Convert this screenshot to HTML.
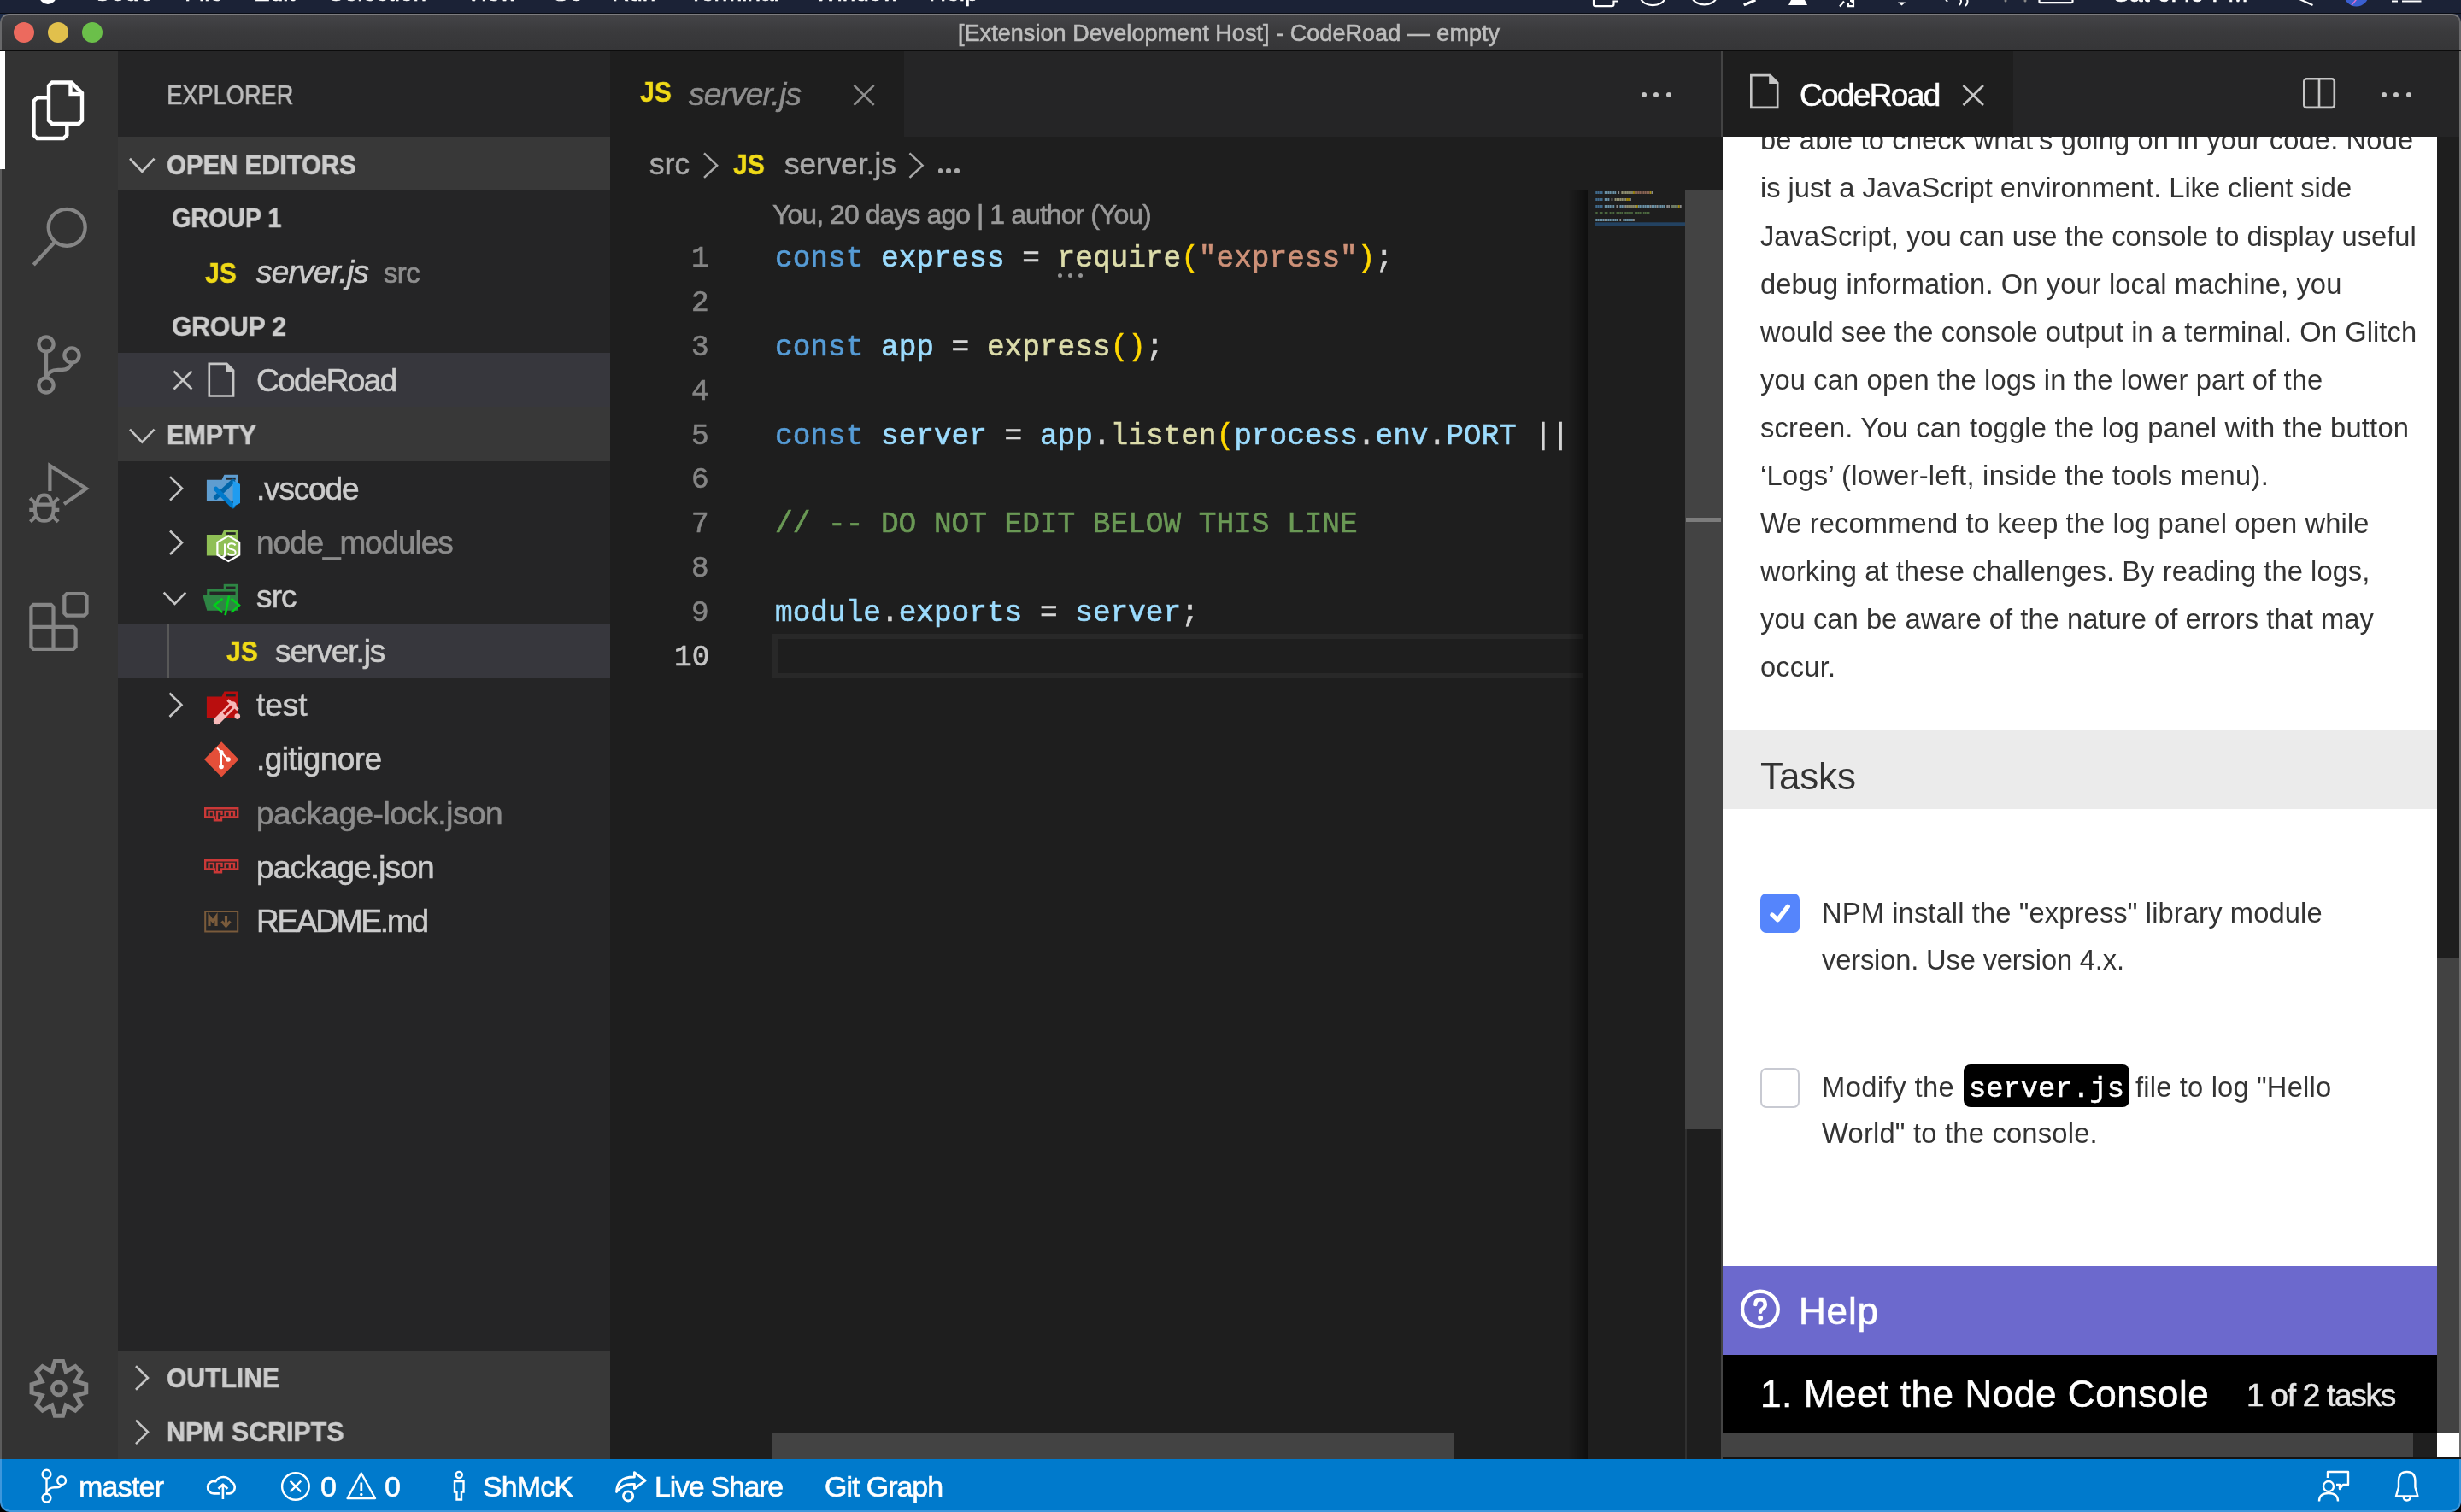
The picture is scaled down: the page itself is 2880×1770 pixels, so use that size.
<!DOCTYPE html><html><head><meta charset="utf-8"><style>
html,body{margin:0;padding:0;width:2880px;height:1770px;overflow:hidden;background:#000;}
.r{position:absolute;display:block;}
.t{position:absolute;white-space:pre;}
.t,svg{will-change:transform;}
.t{-webkit-text-stroke:0.6px currentColor;}
</style></head><body>
<div class="r" style="left:0.0px;top:0.0px;width:2880.0px;height:16.0px;background:#1b2236;"></div>
<div class="r" style="left:0.0px;top:14.6px;width:2880.0px;height:1.4px;background:#0a0d15;"></div>
<div class="r" style="left:0.0px;top:16.0px;width:14.0px;height:14.0px;background:#1f2d48;"></div>
<div class="r" style="left:2866.0px;top:16.0px;width:14.0px;height:14.0px;background:#1b2236;"></div>
<div class="t" style="left:108.9px;top:-21.7px;font-size:28px;line-height:28px;color:#ffffff;font-weight:bold;font-style:normal;font-family:'Liberation Sans', sans-serif;letter-spacing:0.00px;">Code</div>
<div class="t" style="left:215.9px;top:-21.7px;font-size:28px;line-height:28px;color:#ffffff;font-weight:normal;font-style:normal;font-family:'Liberation Sans', sans-serif;letter-spacing:0.00px;">File</div>
<div class="t" style="left:296.9px;top:-21.7px;font-size:28px;line-height:28px;color:#ffffff;font-weight:normal;font-style:normal;font-family:'Liberation Sans', sans-serif;letter-spacing:0.00px;">Edit</div>
<div class="t" style="left:383.9px;top:-21.7px;font-size:28px;line-height:28px;color:#ffffff;font-weight:normal;font-style:normal;font-family:'Liberation Sans', sans-serif;letter-spacing:0.00px;">Selection</div>
<div class="t" style="left:544.9px;top:-21.7px;font-size:28px;line-height:28px;color:#ffffff;font-weight:normal;font-style:normal;font-family:'Liberation Sans', sans-serif;letter-spacing:0.00px;">View</div>
<div class="t" style="left:644.9px;top:-21.7px;font-size:28px;line-height:28px;color:#ffffff;font-weight:normal;font-style:normal;font-family:'Liberation Sans', sans-serif;letter-spacing:0.00px;">Go</div>
<div class="t" style="left:715.9px;top:-21.7px;font-size:28px;line-height:28px;color:#ffffff;font-weight:normal;font-style:normal;font-family:'Liberation Sans', sans-serif;letter-spacing:0.00px;">Run</div>
<div class="t" style="left:805.9px;top:-21.7px;font-size:28px;line-height:28px;color:#ffffff;font-weight:normal;font-style:normal;font-family:'Liberation Sans', sans-serif;letter-spacing:0.00px;">Terminal</div>
<div class="t" style="left:952.9px;top:-21.7px;font-size:28px;line-height:28px;color:#ffffff;font-weight:normal;font-style:normal;font-family:'Liberation Sans', sans-serif;letter-spacing:0.00px;">Window</div>
<div class="t" style="left:1086.9px;top:-21.7px;font-size:28px;line-height:28px;color:#ffffff;font-weight:normal;font-style:normal;font-family:'Liberation Sans', sans-serif;letter-spacing:0.00px;">Help</div>
<div class="r" style="left:46.0px;top:-10.0px;width:20.0px;height:15.0px;background:#ffffff;border-radius:0 0 10px 10px;"></div>
<svg class="r" style="left:1855px;top:0px;width:1005px;height:16px" viewBox="1855 0 1005 16"><g fill="none" stroke="#ffffff" stroke-width="2.2"><path d="M1865,-6 L1865,5 Q1865,7.2 1867.5,7.2 L1886,7.2 Q1888.5,7.2 1888.5,5 L1888.5,1.5 L1893,1.5"/><path d="M1920,-2 A14.5,10 0 0 0 1948.5,-2"/><path d="M1980.5,-2 A14.5,10 0 0 0 2008.5,-2"/><path d="M2158,1.5 L2153,7.5 M2163,3 L2163,7.2 L2169,7.2 L2169,-1 M2165,1 L2167.5,1 L2167.5,4"/><path d="M2276,-2 L2279,2 M2293,-3 Q2297,2 2293,6 M2300,-4 Q2305,2 2300,7" stroke-width="2"/><path d="M2386.5,-6 L2386.5,2 Q2386.5,3.2 2388,3.2 L2424,3.2 Q2425.5,3.2 2425.5,2 L2425.5,-6"/><path d="M2691,-1 L2706.5,6"/><path d="M2799,1.5 L2806,1.5 M2811,1.5 L2833.5,1.5"/></g><path d="M2040,4.5 L2054,-1.5 L2055,1.5 L2041.5,7.2 Z" fill="#ffffff"/><path d="M2093,6 L2115,6 L2111,-2 L2097,-2 Z" fill="#ffffff"/><path d="M2221,2.5 L2225.5,6.5 L2230,2.5 Z" fill="#ffffff"/><circle cx="2757.5" cy="-7" r="14.5" fill="#3a5fd0"/><path d="M2752,6 L2762,-6" stroke="#e070d0" stroke-width="1.5"/><circle cx="2347" cy="1" r="1.5" fill="#888"/><circle cx="2370" cy="1" r="1.5" fill="#888"/></svg>
<div class="t" style="left:2473.0px;top:-21.1px;font-size:28px;line-height:28px;color:#ffffff;font-weight:normal;font-style:normal;font-family:'Liberation Sans', sans-serif;letter-spacing:0.34px;">Sat 6:49 PM</div>
<div class="r" style="left:0.0px;top:16.0px;width:2880.0px;height:46.0px;background:linear-gradient(#444447,#3a3a3c 45%,#353537);border-radius:10px 10px 0 0;box-sizing:border-box;border-top:2px solid #7c7c7f;border-left:2px solid #68686a;border-right:2px solid #68686a;"></div>
<div class="r" style="left:0.0px;top:58.5px;width:2880.0px;height:1.5px;background:#0c0c0c;"></div>
<div class="r" style="left:16.0px;top:26.0px;width:24.0px;height:24.0px;background:#ec6a5e;border-radius:50%;"></div>
<div class="r" style="left:56.0px;top:26.0px;width:24.0px;height:24.0px;background:#e1c04c;border-radius:50%;"></div>
<div class="r" style="left:96.0px;top:26.0px;width:24.0px;height:24.0px;background:#6bbf4a;border-radius:50%;"></div>
<div class="t" style="left:1121.0px;top:26.2px;font-size:27px;line-height:27px;color:#bdbdbd;font-weight:normal;font-style:normal;font-family:'Liberation Sans', sans-serif;letter-spacing:0.05px;">[Extension Development Host] - CodeRoad — empty</div>
<div class="r" style="left:0.0px;top:60.0px;width:2880.0px;height:1648.0px;background:#1e1e1e;"></div>
<div class="r" style="left:0.0px;top:60.0px;width:138.0px;height:1648.0px;background:#333333;"></div>
<div class="r" style="left:0.0px;top:60.0px;width:2.0px;height:1648.0px;background:#5c5c5c;"></div>
<div class="r" style="left:138.0px;top:60.0px;width:576.0px;height:1648.0px;background:#252526;"></div>
<div class="r" style="left:0.0px;top:60.0px;width:6.0px;height:138.0px;background:#ffffff;"></div>
<svg class="r" style="left:20px;top:80px;width:100px;height:100px" viewBox="20 80 100 100"><g fill="none" stroke="#ffffff" stroke-width="4.4" stroke-linejoin="miter"><path d="M61,96.5 L83.5,96.5 L96,109 L96,141 L92,145 L61,145 L57,141 L57,100.5 Z"/><path d="M82.5,96.5 L82.5,110 L96,110"/><path d="M57,114.3 L43.5,114.3 L39.5,118.3 L39.5,158 L43.5,162 L74.3,162 L78.3,158 L78.3,145"/></g></svg>
<svg class="r" style="left:20px;top:230px;width:100px;height:100px" viewBox="20 230 100 100"><g fill="none" stroke="#858585" stroke-width="4.3"><circle cx="78.2" cy="266.3" r="21.5"/><path d="M63.4,284 L39.3,310"/></g></svg>
<svg class="r" style="left:30px;top:380px;width:80px;height:90px" viewBox="30 380 80 90"><g fill="none" stroke="#858585" stroke-width="4.3"><circle cx="54" cy="403" r="8.6"/><circle cx="84" cy="416" r="8.6"/><circle cx="54" cy="451" r="8.6"/><path d="M54,411.6 L54,442.4"/><path d="M54,442 Q57,433 68,433 L72,433 Q82,433 84,424.6"/></g></svg>
<svg class="r" style="left:20px;top:530px;width:100px;height:100px" viewBox="20 530 100 100"><g fill="none" stroke="#858585" stroke-width="4.2"><path d="M58.4,575 L58.4,545 L101,572 L75,590" stroke-linejoin="miter"/><path d="M43.6,590.6 Q43.6,579.5 51.8,579.5 Q60,579.5 60,590.6"/><path d="M38.9,590.6 L64.7,590.6 M40.9,590.6 L40.9,595 Q40.9,609.7 51.8,609.7 Q62.7,609.7 62.7,595 L62.7,590.6"/><path d="M34.3,596.9 L40.9,596.9 M69.3,596.9 L62.7,596.9 M35.2,583.3 L41.8,589.6 M68.4,583.3 L61.8,589.6 M35.5,610.8 L42.3,604 M68.1,610.8 L61.3,604"/></g></svg>
<svg class="r" style="left:20px;top:680px;width:100px;height:100px" viewBox="20 680 100 100"><g fill="none" stroke="#858585" stroke-width="4.2"><path d="M78,695 L98.7,695 L101.5,697.8 L101.5,717.8 L98.7,720.6 L78,720.6 L75.3,717.8 L75.3,697.8 Z"/><path d="M39.2,707.8 L59.7,707.8 L62.5,710.6 L62.5,733.8 L85.8,733.8 L88.6,736.6 L88.6,757.1 L85.8,759.9 L39.2,759.9 L36.4,757.1 L36.4,710.6 Z"/><path d="M36.4,733.8 L62.5,733.8 L62.5,759.9"/></g></svg>
<svg class="r" style="left:20px;top:1575px;width:100px;height:100px" viewBox="20 1575 100 100"><g fill="none" stroke="#858585" stroke-width="5"><polygon points="64.20,1593.55 73.60,1593.55 77.09,1605.63 88.10,1599.55 94.75,1606.20 88.67,1617.21 100.75,1620.70 100.75,1630.10 88.67,1633.59 94.75,1644.60 88.10,1651.25 77.09,1645.17 73.60,1657.25 64.20,1657.25 60.71,1645.17 49.70,1651.25 43.05,1644.60 49.13,1633.59 37.05,1630.10 37.05,1620.70 49.13,1617.21 43.05,1606.20 49.70,1599.55 60.71,1605.63" stroke-linejoin="miter"/><circle cx="68.9" cy="1625.4" r="7.45" stroke-width="4.9"/></g></svg>
<div class="t" style="left:195.0px;top:96.3px;font-size:31px;line-height:31px;color:#bbbbbb;font-weight:normal;font-style:normal;font-family:'Liberation Sans', sans-serif;letter-spacing:0.00px;transform:scaleX(0.8766);transform-origin:2px 0;">EXPLORER</div>
<div class="r" style="left:138.0px;top:160.0px;width:576.0px;height:63.4px;background:#383838;"></div>
<svg class="r" style="left:147px;top:177px;width:38px;height:31px" viewBox="147 177 38 31"><path d="M152,185.75 L166.3,200.75 L180.6,185.75" fill="none" stroke="#c5c5c5" stroke-width="2.6"/></svg>
<div class="t" style="left:195.0px;top:177.6px;font-size:31px;line-height:31px;color:#cccccc;font-weight:bold;font-style:normal;font-family:'Liberation Sans', sans-serif;letter-spacing:0.00px;transform:scaleX(0.9478);transform-origin:2px 0;">OPEN EDITORS</div>
<div class="t" style="left:200.8px;top:239.8px;font-size:31px;line-height:31px;color:#cccccc;font-weight:bold;font-style:normal;font-family:'Liberation Sans', sans-serif;letter-spacing:0.00px;transform:scaleX(0.9224);transform-origin:2px 0;">GROUP 1</div>
<div class="t" style="left:240.2px;top:302.3px;font-size:34px;line-height:34px;color:#f0da17;font-weight:bold;font-style:normal;font-family:'Liberation Sans', sans-serif;letter-spacing:0.00px;transform:scaleX(0.8775);transform-origin:1.5px 0;">JS</div>
<div class="t" style="left:299.6px;top:299.7px;font-size:37px;line-height:37px;color:#cccccc;font-weight:normal;font-style:italic;font-family:'Liberation Sans', sans-serif;letter-spacing:-0.80px;">server.js</div>
<div class="t" style="left:449.0px;top:303.1px;font-size:33px;line-height:33px;color:#8f8f8f;font-weight:normal;font-style:normal;font-family:'Liberation Sans', sans-serif;letter-spacing:-0.65px;">src</div>
<div class="t" style="left:200.8px;top:366.5px;font-size:31px;line-height:31px;color:#cccccc;font-weight:bold;font-style:normal;font-family:'Liberation Sans', sans-serif;letter-spacing:0.00px;transform:scaleX(0.9641);transform-origin:2px 0;">GROUP 2</div>
<div class="r" style="left:138.0px;top:413.4px;width:576.0px;height:63.4px;background:#37373d;"></div>
<svg class="r" style="left:195px;top:425px;width:37px;height:40px" viewBox="195 425 37 40"><path d="M203.5,434.5 L224.5,455.5 M224.5,434.5 L203.5,455.5" stroke="#c5c5c5" stroke-width="2.6" fill="none"/></svg>
<svg class="r" style="left:240px;top:421px;width:37px;height:46px" viewBox="240 421 37 46"><path d="M244.8,425.90000000000003 L265.4,425.90000000000003 L273.09999999999997,433.6 L273.09999999999997,463.5 L244.8,463.5 Z" fill="none" stroke="#c5c5c5" stroke-width="2.6" stroke-linejoin="miter"/><path d="M264.09999999999997,424.6 L274.4,434.90000000000003 L264.09999999999997,434.90000000000003 Z" fill="#c5c5c5"/></svg>
<div class="t" style="left:299.6px;top:426.7px;font-size:37px;line-height:37px;color:#cccccc;font-weight:normal;font-style:normal;font-family:'Liberation Sans', sans-serif;letter-spacing:-1.67px;">CodeRoad</div>
<div class="r" style="left:138.0px;top:476.8px;width:576.0px;height:63.4px;background:#383838;"></div>
<svg class="r" style="left:147px;top:494px;width:38px;height:31px" viewBox="147 494 38 31"><path d="M152,502.55 L166.3,517.55 L180.6,502.55" fill="none" stroke="#c5c5c5" stroke-width="2.6"/></svg>
<div class="t" style="left:195.0px;top:494.4px;font-size:31px;line-height:31px;color:#cccccc;font-weight:bold;font-style:normal;font-family:'Liberation Sans', sans-serif;letter-spacing:0.00px;transform:scaleX(0.9832);transform-origin:2px 0;">EMPTY</div>
<svg class="r" style="left:194px;top:543px;width:23px;height:57px" viewBox="194 543 23 57"><path d="M199,558.0899999999999 L213.0,571.8399999999999 L199,585.5899999999999" fill="none" stroke="#c5c5c5" stroke-width="2.6"/></svg>
<svg class="r" style="left:239px;top:547px;width:44px;height:42px" viewBox="239 547 44 42"><path d="M241.9,561.7 L259.6,561.7 L262.4,555.7 L278.9,555.7 L278.9,586.3000000000001 L241.9,586.3000000000001 Z" fill="#5f9dd0"/><rect x="264.7" y="558.9000000000001" width="11" height="2.8" fill="#252526"/></svg>
<svg class="r" style="left:245px;top:555px;width:45px;height:45px" viewBox="245 555 45 45"><path d="M272.6,563.4 L252.6,582.2" stroke="#0065a9" stroke-width="5.4" stroke-linecap="round"/><path d="M252.6,572.4 L272.6,592.6" stroke="#007acc" stroke-width="5.4" stroke-linecap="round"/><path d="M272.6,562.7 L281,566.8 L281,589 L272.6,593.2 Z" fill="#1f9cf0"/></svg>
<div class="t" style="left:299.6px;top:553.5px;font-size:37px;line-height:37px;color:#cccccc;font-weight:normal;font-style:normal;font-family:'Liberation Sans', sans-serif;letter-spacing:-1.17px;">.vscode</div>
<svg class="r" style="left:194px;top:606px;width:23px;height:57px" viewBox="194 606 23 57"><path d="M199,621.4499999999999 L213.0,635.1999999999999 L199,648.9499999999999" fill="none" stroke="#c5c5c5" stroke-width="2.6"/></svg>
<svg class="r" style="left:239px;top:611px;width:44px;height:42px" viewBox="239 611 44 42"><path d="M241.9,625.9 L259.6,625.9 L262.4,619.9 L278.9,619.9 L278.9,650.5 L241.9,650.5 Z" fill="#8fbf55"/><rect x="264.7" y="623.1" width="11" height="2.8" fill="#252526"/></svg>
<svg class="r" style="left:250px;top:620px;width:36px;height:42px" viewBox="250 620 36 42"><path d="M267.3,627.4 L280.2,634.9 L280.2,649.5 L267.3,657 L254.4,649.5 L254.4,634.9 Z" fill="none" stroke="#ffffff" stroke-width="2.2"/><path d="M263.1,636.5 L263.1,648.5 Q263.1,652 260,652 L257.6,652" fill="none" stroke="#ffffff" stroke-width="2.2"/><path d="M275.5,638.5 Q274.5,636.2 271,636.2 Q267,636.2 267,639.4 Q267,642.2 271,643 Q275.6,643.8 275.6,646.8 Q275.6,650 271.2,650 Q267.4,650 266.6,647.4" fill="none" stroke="#ffffff" stroke-width="2"/></svg>
<div class="t" style="left:299.6px;top:616.9px;font-size:37px;line-height:37px;color:#8c8c8c;font-weight:normal;font-style:normal;font-family:'Liberation Sans', sans-serif;letter-spacing:-1.10px;">node_modules</div>
<svg class="r" style="left:186px;top:686px;width:36px;height:27px" viewBox="186 686 36 27"><path d="M191.7,693.7 L204.5,707.0 L217.29999999999998,693.7" fill="none" stroke="#c5c5c5" stroke-width="2.6"/></svg>
<svg class="r" style="left:234px;top:680px;width:50px;height:42px" viewBox="234 680 50 42"><rect x="261.7" y="683.8" width="16.9" height="7" fill="#2e8544"/><rect x="264.5" y="686.6" width="11" height="3.6" fill="#252526"/><rect x="242.2" y="690" width="36.4" height="24.6" fill="#2e8544"/><rect x="245.4" y="692.6" width="30.1" height="3.8" fill="#252526"/><path d="M237.2,696.4 L273.6,696.4 L279.3,714.6 L242.2,714.6 Z" fill="#2e8544"/><path d="M260.4,700.8 L251,708.6 L260.4,717.1 M270.5,700.8 L279.9,708.6 L270.5,717.1 M268,697.5 L263.6,720.3" fill="none" stroke="#00d01a" stroke-width="2.6"/></svg>
<div class="t" style="left:299.6px;top:680.2px;font-size:37px;line-height:37px;color:#cccccc;font-weight:normal;font-style:normal;font-family:'Liberation Sans', sans-serif;letter-spacing:-0.86px;">src</div>
<div class="r" style="left:138.0px;top:730.2px;width:576.0px;height:63.4px;background:#37373d;"></div>
<div class="r" style="left:196.0px;top:730.2px;width:2.3px;height:63.4px;background:#585858;"></div>
<div class="t" style="left:264.5px;top:745.0px;font-size:34px;line-height:34px;color:#f0da17;font-weight:bold;font-style:normal;font-family:'Liberation Sans', sans-serif;letter-spacing:0.00px;transform:scaleX(0.8775);transform-origin:1.5px 0;">JS</div>
<div class="t" style="left:322.0px;top:743.6px;font-size:37px;line-height:37px;color:#cccccc;font-weight:normal;font-style:normal;font-family:'Liberation Sans', sans-serif;letter-spacing:-1.05px;">server.js</div>
<svg class="r" style="left:193px;top:796px;width:24px;height:57px" viewBox="193 796 24 57"><path d="M198.5,811.53 L212.5,825.28 L198.5,839.03" fill="none" stroke="#c5c5c5" stroke-width="2.6"/></svg>
<svg class="r" style="left:239px;top:801px;width:44px;height:42px" viewBox="239 801 44 42"><path d="M241.9,815.4 L259.6,815.4 L262.4,809.4 L278.9,809.4 L278.9,840.0 L241.9,840.0 Z" fill="#b90e0e"/><rect x="264.7" y="812.6" width="11" height="2.8" fill="#252526"/></svg>
<svg class="r" style="left:244px;top:812px;width:46px;height:44px" viewBox="244 812 46 44"><path d="M272.5,825.5 L254,844" stroke="#f7b9b9" stroke-width="8.5" stroke-linecap="round"/><path d="M271.5,826.5 L262,836" stroke="#b90e0e" stroke-width="3.2"/><path d="M266.5,819.5 L278.5,831" stroke="#f7b9b9" stroke-width="3.4"/><circle cx="277.8" cy="838.6" r="3.3" fill="#f7b9b9"/></svg>
<div class="t" style="left:299.6px;top:806.9px;font-size:37px;line-height:37px;color:#cccccc;font-weight:normal;font-style:normal;font-family:'Liberation Sans', sans-serif;letter-spacing:-0.05px;">test</div>
<svg class="r" style="left:236px;top:866px;width:46px;height:46px" viewBox="236 866 46 46"><path d="M259.2,868.3 L279.4,889 L259.2,909.6 L239,889 Z" fill="#e44f39"/><path d="M254,875.5 L259,880.5 L259,898 M259,880.5 L266,888.5" stroke="#ffffff" stroke-width="2" fill="none"/><circle cx="259" cy="880.5" r="2.6" fill="#fff"/><circle cx="259" cy="897.5" r="2.8" fill="#fff"/><circle cx="267" cy="889" r="2.8" fill="#fff"/></svg>
<div class="t" style="left:299.6px;top:870.3px;font-size:37px;line-height:37px;color:#cccccc;font-weight:normal;font-style:normal;font-family:'Liberation Sans', sans-serif;letter-spacing:-0.58px;">.gitignore</div>
<svg class="r" style="left:236px;top:942px;width:46px;height:23px" viewBox="236 942 46 23"><path d="M240.2,946.2 L278.2,946.2 L278.2,956.5 L259,956.5 L259,960.2 L251,960.2 L251,956.5 L240.2,956.5 Z" fill="none" stroke="#cb3837" stroke-width="2.4"/><path d="M244.5,955.5 L244.5,950 L250,950 L250,955.5 M254,959 L254,950 L259.5,950 L259.5,954 M263.5,955.5 L263.5,950 L274,950 L274,955.5 M268.8,950 L268.8,955.5" fill="none" stroke="#cb3837" stroke-width="2.4"/></svg>
<div class="t" style="left:299.6px;top:933.7px;font-size:37px;line-height:37px;color:#8c8c8c;font-weight:normal;font-style:normal;font-family:'Liberation Sans', sans-serif;letter-spacing:-0.47px;">package-lock.json</div>
<svg class="r" style="left:236px;top:1003px;width:46px;height:23px" viewBox="236 1003 46 23"><path d="M240.2,1007.2 L278.2,1007.2 L278.2,1017.5 L259,1017.5 L259,1021.2 L251,1021.2 L251,1017.5 L240.2,1017.5 Z" fill="none" stroke="#cb3837" stroke-width="2.4"/><path d="M244.5,1016.5 L244.5,1011 L250,1011 L250,1016.5 M254,1020 L254,1011 L259.5,1011 L259.5,1015 M263.5,1016.5 L263.5,1011 L274,1011 L274,1016.5 M268.8,1011 L268.8,1016.5" fill="none" stroke="#cb3837" stroke-width="2.4"/></svg>
<div class="t" style="left:299.6px;top:997.0px;font-size:37px;line-height:37px;color:#cccccc;font-weight:normal;font-style:normal;font-family:'Liberation Sans', sans-serif;letter-spacing:-0.87px;">package.json</div>
<svg class="r" style="left:236px;top:1062px;width:46px;height:32px" viewBox="236 1062 46 32"><rect x="240.2" y="1067" width="38" height="23.5" fill="none" stroke="#7a5b3b" stroke-width="2"/><path d="M245,1084 L245,1073 L249,1078.5 L253,1073 L253,1084 M264.5,1072 L264.5,1083 M259.5,1078.5 L264.5,1084 L269.5,1078.5" fill="none" stroke="#7a5b3b" stroke-width="3.2"/></svg>
<div class="t" style="left:299.6px;top:1060.4px;font-size:37px;line-height:37px;color:#cccccc;font-weight:normal;font-style:normal;font-family:'Liberation Sans', sans-serif;letter-spacing:-2.25px;">README.md</div>
<div class="r" style="left:138.0px;top:1581.3px;width:576.0px;height:126.7px;background:#383838;"></div>
<svg class="r" style="left:154px;top:1584px;width:23px;height:57px" viewBox="154 1584 23 57"><path d="M159,1599.23 L173.0,1612.98 L159,1626.73" fill="none" stroke="#c5c5c5" stroke-width="2.6"/></svg>
<div class="t" style="left:195.0px;top:1597.8px;font-size:31px;line-height:31px;color:#cccccc;font-weight:bold;font-style:normal;font-family:'Liberation Sans', sans-serif;letter-spacing:0.00px;transform:scaleX(0.9701);transform-origin:2px 0;">OUTLINE</div>
<svg class="r" style="left:154px;top:1647px;width:23px;height:57px" viewBox="154 1647 23 57"><path d="M159,1662.59 L173.0,1676.34 L159,1690.09" fill="none" stroke="#c5c5c5" stroke-width="2.6"/></svg>
<div class="t" style="left:195.0px;top:1661.2px;font-size:31px;line-height:31px;color:#cccccc;font-weight:bold;font-style:normal;font-family:'Liberation Sans', sans-serif;letter-spacing:0.00px;transform:scaleX(0.9794);transform-origin:2px 0;">NPM SCRIPTS</div>
<div class="r" style="left:714.0px;top:60.0px;width:1300.0px;height:100.0px;background:#252526;"></div>
<div class="r" style="left:714.0px;top:60.0px;width:343.6px;height:100.0px;background:#1e1e1e;"></div>
<div class="r" style="left:2013.5px;top:60.0px;width:2.5px;height:100.0px;background:#444444;"></div>
<div class="t" style="left:748.5px;top:90.3px;font-size:34px;line-height:34px;color:#f0da17;font-weight:bold;font-style:normal;font-family:'Liberation Sans', sans-serif;letter-spacing:0.00px;transform:scaleX(0.8775);transform-origin:1.5px 0;">JS</div>
<div class="t" style="left:805.6px;top:92.3px;font-size:37px;line-height:37px;color:#8e8e8e;font-weight:normal;font-style:italic;font-family:'Liberation Sans', sans-serif;letter-spacing:-0.80px;">server.js</div>
<svg class="r" style="left:994px;top:95px;width:34px;height:33px" viewBox="994 95 34 33"><path d="M999.5,99.8 L1022.7,122.8 M1022.7,99.8 L999.5,122.8" stroke="#8e8e8e" stroke-width="2.6" fill="none"/></svg>
<div class="r" style="left:1920.7px;top:107.7px;width:6.2px;height:6.2px;background:#c5c5c5;border-radius:50%;"></div>
<div class="r" style="left:1935.1px;top:107.7px;width:6.2px;height:6.2px;background:#c5c5c5;border-radius:50%;"></div>
<div class="r" style="left:1949.5px;top:107.7px;width:6.2px;height:6.2px;background:#c5c5c5;border-radius:50%;"></div>
<div class="t" style="left:759.7px;top:174.0px;font-size:35px;line-height:35px;color:#a9a9a9;font-weight:normal;font-style:normal;font-family:'Liberation Sans', sans-serif;letter-spacing:0.17px;">src</div>
<svg class="r" style="left:819px;top:164px;width:24px;height:59px" viewBox="819 164 24 59"><path d="M824,179.45 L839.1,193.7 L824,207.95" fill="none" stroke="#a9a9a9" stroke-width="2.5"/></svg>
<div class="t" style="left:858.2px;top:174.9px;font-size:34px;line-height:34px;color:#f0da17;font-weight:bold;font-style:normal;font-family:'Liberation Sans', sans-serif;letter-spacing:0.00px;transform:scaleX(0.8775);transform-origin:1.5px 0;">JS</div>
<div class="t" style="left:917.6px;top:174.0px;font-size:35px;line-height:35px;color:#a9a9a9;font-weight:normal;font-style:normal;font-family:'Liberation Sans', sans-serif;letter-spacing:0.06px;">server.js</div>
<svg class="r" style="left:1059px;top:164px;width:25px;height:59px" viewBox="1059 164 25 59"><path d="M1064.5,179.45 L1079.6,193.7 L1064.5,207.95" fill="none" stroke="#a9a9a9" stroke-width="2.5"/></svg>
<div class="r" style="left:1097.7px;top:197.0px;width:5.6px;height:5.6px;background:#a9a9a9;border-radius:50%;"></div>
<div class="r" style="left:1107.4px;top:197.0px;width:5.6px;height:5.6px;background:#a9a9a9;border-radius:50%;"></div>
<div class="r" style="left:1117.1px;top:197.0px;width:5.6px;height:5.6px;background:#a9a9a9;border-radius:50%;"></div>
<div class="t" style="left:904.1px;top:234.5px;font-size:32px;line-height:32px;color:#999999;font-weight:normal;font-style:normal;font-family:'Liberation Sans', sans-serif;letter-spacing:-0.94px;">You, 20 days ago | 1 author (You)</div>
<div class="r" style="left:904px;top:742px;width:948px;height:51.5px;box-sizing:border-box;border:6px solid #282828;border-right:none;"></div>
<div class="t" style="left:809.1px;top:286.2px;font-size:34.43px;line-height:34.43px;color:#858585;font-weight:normal;font-style:normal;font-family:'Liberation Mono', monospace;letter-spacing:0.00px;">1</div>
<div class="t" style="left:809.1px;top:338.0px;font-size:34.43px;line-height:34.43px;color:#858585;font-weight:normal;font-style:normal;font-family:'Liberation Mono', monospace;letter-spacing:0.00px;">2</div>
<div class="t" style="left:809.1px;top:389.8px;font-size:34.43px;line-height:34.43px;color:#858585;font-weight:normal;font-style:normal;font-family:'Liberation Mono', monospace;letter-spacing:0.00px;">3</div>
<div class="t" style="left:809.1px;top:441.7px;font-size:34.43px;line-height:34.43px;color:#858585;font-weight:normal;font-style:normal;font-family:'Liberation Mono', monospace;letter-spacing:0.00px;">4</div>
<div class="t" style="left:809.1px;top:493.5px;font-size:34.43px;line-height:34.43px;color:#858585;font-weight:normal;font-style:normal;font-family:'Liberation Mono', monospace;letter-spacing:0.00px;">5</div>
<div class="t" style="left:809.1px;top:545.4px;font-size:34.43px;line-height:34.43px;color:#858585;font-weight:normal;font-style:normal;font-family:'Liberation Mono', monospace;letter-spacing:0.00px;">6</div>
<div class="t" style="left:809.1px;top:597.2px;font-size:34.43px;line-height:34.43px;color:#858585;font-weight:normal;font-style:normal;font-family:'Liberation Mono', monospace;letter-spacing:0.00px;">7</div>
<div class="t" style="left:809.1px;top:649.0px;font-size:34.43px;line-height:34.43px;color:#858585;font-weight:normal;font-style:normal;font-family:'Liberation Mono', monospace;letter-spacing:0.00px;">8</div>
<div class="t" style="left:809.1px;top:700.9px;font-size:34.43px;line-height:34.43px;color:#858585;font-weight:normal;font-style:normal;font-family:'Liberation Mono', monospace;letter-spacing:0.00px;">9</div>
<div class="t" style="left:788.5px;top:752.7px;font-size:34.43px;line-height:34.43px;color:#c6c6c6;font-weight:normal;font-style:normal;font-family:'Liberation Mono', monospace;letter-spacing:0.00px;">10</div>
<div class="r" style="left:0;top:0;width:1858px;height:1708px;overflow:hidden;">
<div class="t" style="left:906.6px;top:286.2px;font-family:'Liberation Mono', monospace;font-size:34.43px;line-height:34.43px;"><span style="color:#569cd6">const</span><span style="color:#d4d4d4"> </span><span style="color:#9cdcfe">express</span><span style="color:#d4d4d4"> = </span><span style="color:#dcdcaa">require</span><span style="color:#ffd700">(</span><span style="color:#ce9178">"express"</span><span style="color:#ffd700">)</span><span style="color:#d4d4d4">;</span></div>
<div class="t" style="left:906.6px;top:389.8px;font-family:'Liberation Mono', monospace;font-size:34.43px;line-height:34.43px;"><span style="color:#569cd6">const</span><span style="color:#d4d4d4"> </span><span style="color:#9cdcfe">app</span><span style="color:#d4d4d4"> = </span><span style="color:#dcdcaa">express</span><span style="color:#ffd700">()</span><span style="color:#d4d4d4">;</span></div>
<div class="t" style="left:906.6px;top:493.5px;font-family:'Liberation Mono', monospace;font-size:34.43px;line-height:34.43px;"><span style="color:#569cd6">const</span><span style="color:#d4d4d4"> </span><span style="color:#9cdcfe">server</span><span style="color:#d4d4d4"> = </span><span style="color:#9cdcfe">app</span><span style="color:#d4d4d4">.</span><span style="color:#dcdcaa">listen</span><span style="color:#ffd700">(</span><span style="color:#9cdcfe">process</span><span style="color:#d4d4d4">.</span><span style="color:#9cdcfe">env</span><span style="color:#d4d4d4">.</span><span style="color:#9cdcfe">PORT</span><span style="color:#d4d4d4"> || </span><span style="color:#b5cea8">3000</span><span style="color:#ffd700">)</span><span style="color:#d4d4d4">;</span></div>
<div class="t" style="left:906.6px;top:597.2px;font-family:'Liberation Mono', monospace;font-size:34.43px;line-height:34.43px;"><span style="color:#6a9955">// -- DO NOT EDIT BELOW THIS LINE</span></div>
<div class="t" style="left:906.6px;top:700.9px;font-family:'Liberation Mono', monospace;font-size:34.43px;line-height:34.43px;"><span style="color:#9cdcfe">module</span><span style="color:#d4d4d4">.</span><span style="color:#9cdcfe">exports</span><span style="color:#d4d4d4"> = </span><span style="color:#9cdcfe">server</span><span style="color:#d4d4d4">;</span></div>
</div>
<div class="r" style="left:1238.0px;top:320.0px;width:5.2px;height:5.2px;background:#a8a8a8;border-radius:50%;opacity:.85"></div>
<div class="r" style="left:1250.0px;top:320.0px;width:5.2px;height:5.2px;background:#a8a8a8;border-radius:50%;opacity:.85"></div>
<div class="r" style="left:1261.7px;top:320.0px;width:5.2px;height:5.2px;background:#a8a8a8;border-radius:50%;opacity:.85"></div>
<div class="r" style="left:1836.0px;top:223.4px;width:22.0px;height:1484.6px;background:linear-gradient(to right, rgba(0,0,0,0), rgba(0,0,0,0.5));"></div>
<div class="r" style="left:1858.0px;top:223.4px;width:114.0px;height:1484.6px;background:#1e1e1e;"></div>
<svg class="r" style="left:1858px;top:220px;width:114px;height:50px" viewBox="1858 220 114 50"><rect x="1866.00" y="224.0" width="1.7" height="3" fill="#569cd6" opacity="0.6"/><rect x="1867.96" y="224.0" width="1.7" height="3" fill="#569cd6" opacity="0.6"/><rect x="1869.92" y="224.0" width="1.7" height="3" fill="#569cd6" opacity="0.6"/><rect x="1871.88" y="224.0" width="1.7" height="3" fill="#569cd6" opacity="0.6"/><rect x="1873.84" y="224.0" width="1.7" height="3" fill="#569cd6" opacity="0.6"/><rect x="1877.76" y="224.0" width="1.7" height="3" fill="#9cdcfe" opacity="0.6"/><rect x="1879.72" y="224.0" width="1.7" height="3" fill="#9cdcfe" opacity="0.6"/><rect x="1881.68" y="224.0" width="1.7" height="3" fill="#9cdcfe" opacity="0.6"/><rect x="1883.64" y="224.0" width="1.7" height="3" fill="#9cdcfe" opacity="0.6"/><rect x="1885.60" y="224.0" width="1.7" height="3" fill="#9cdcfe" opacity="0.6"/><rect x="1887.56" y="224.0" width="1.7" height="3" fill="#9cdcfe" opacity="0.6"/><rect x="1889.52" y="224.0" width="1.7" height="3" fill="#9cdcfe" opacity="0.6"/><rect x="1893.44" y="224.0" width="1.7" height="3" fill="#d4d4d4" opacity="0.6"/><rect x="1897.36" y="224.0" width="1.7" height="3" fill="#dcdcaa" opacity="0.6"/><rect x="1899.32" y="224.0" width="1.7" height="3" fill="#dcdcaa" opacity="0.6"/><rect x="1901.28" y="224.0" width="1.7" height="3" fill="#dcdcaa" opacity="0.6"/><rect x="1903.24" y="224.0" width="1.7" height="3" fill="#dcdcaa" opacity="0.6"/><rect x="1905.20" y="224.0" width="1.7" height="3" fill="#dcdcaa" opacity="0.6"/><rect x="1907.16" y="224.0" width="1.7" height="3" fill="#dcdcaa" opacity="0.6"/><rect x="1909.12" y="224.0" width="1.7" height="3" fill="#dcdcaa" opacity="0.6"/><rect x="1911.08" y="224.0" width="1.7" height="3" fill="#ffd700" opacity="0.6"/><rect x="1913.04" y="224.0" width="1.7" height="3" fill="#ce9178" opacity="0.6"/><rect x="1915.00" y="224.0" width="1.7" height="3" fill="#ce9178" opacity="0.6"/><rect x="1916.96" y="224.0" width="1.7" height="3" fill="#ce9178" opacity="0.6"/><rect x="1918.92" y="224.0" width="1.7" height="3" fill="#ce9178" opacity="0.6"/><rect x="1920.88" y="224.0" width="1.7" height="3" fill="#ce9178" opacity="0.6"/><rect x="1922.84" y="224.0" width="1.7" height="3" fill="#ce9178" opacity="0.6"/><rect x="1924.80" y="224.0" width="1.7" height="3" fill="#ce9178" opacity="0.6"/><rect x="1926.76" y="224.0" width="1.7" height="3" fill="#ce9178" opacity="0.6"/><rect x="1928.72" y="224.0" width="1.7" height="3" fill="#ce9178" opacity="0.6"/><rect x="1930.68" y="224.0" width="1.7" height="3" fill="#ffd700" opacity="0.6"/><rect x="1932.64" y="224.0" width="1.7" height="3" fill="#d4d4d4" opacity="0.6"/><rect x="1866.00" y="232.0" width="1.7" height="3" fill="#569cd6" opacity="0.6"/><rect x="1867.96" y="232.0" width="1.7" height="3" fill="#569cd6" opacity="0.6"/><rect x="1869.92" y="232.0" width="1.7" height="3" fill="#569cd6" opacity="0.6"/><rect x="1871.88" y="232.0" width="1.7" height="3" fill="#569cd6" opacity="0.6"/><rect x="1873.84" y="232.0" width="1.7" height="3" fill="#569cd6" opacity="0.6"/><rect x="1877.76" y="232.0" width="1.7" height="3" fill="#9cdcfe" opacity="0.6"/><rect x="1879.72" y="232.0" width="1.7" height="3" fill="#9cdcfe" opacity="0.6"/><rect x="1881.68" y="232.0" width="1.7" height="3" fill="#9cdcfe" opacity="0.6"/><rect x="1885.60" y="232.0" width="1.7" height="3" fill="#d4d4d4" opacity="0.6"/><rect x="1889.52" y="232.0" width="1.7" height="3" fill="#dcdcaa" opacity="0.6"/><rect x="1891.48" y="232.0" width="1.7" height="3" fill="#dcdcaa" opacity="0.6"/><rect x="1893.44" y="232.0" width="1.7" height="3" fill="#dcdcaa" opacity="0.6"/><rect x="1895.40" y="232.0" width="1.7" height="3" fill="#dcdcaa" opacity="0.6"/><rect x="1897.36" y="232.0" width="1.7" height="3" fill="#dcdcaa" opacity="0.6"/><rect x="1899.32" y="232.0" width="1.7" height="3" fill="#dcdcaa" opacity="0.6"/><rect x="1901.28" y="232.0" width="1.7" height="3" fill="#dcdcaa" opacity="0.6"/><rect x="1903.24" y="232.0" width="1.7" height="3" fill="#ffd700" opacity="0.6"/><rect x="1905.20" y="232.0" width="1.7" height="3" fill="#ffd700" opacity="0.6"/><rect x="1907.16" y="232.0" width="1.7" height="3" fill="#d4d4d4" opacity="0.6"/><rect x="1866.00" y="240.0" width="1.7" height="3" fill="#569cd6" opacity="0.6"/><rect x="1867.96" y="240.0" width="1.7" height="3" fill="#569cd6" opacity="0.6"/><rect x="1869.92" y="240.0" width="1.7" height="3" fill="#569cd6" opacity="0.6"/><rect x="1871.88" y="240.0" width="1.7" height="3" fill="#569cd6" opacity="0.6"/><rect x="1873.84" y="240.0" width="1.7" height="3" fill="#569cd6" opacity="0.6"/><rect x="1877.76" y="240.0" width="1.7" height="3" fill="#9cdcfe" opacity="0.6"/><rect x="1879.72" y="240.0" width="1.7" height="3" fill="#9cdcfe" opacity="0.6"/><rect x="1881.68" y="240.0" width="1.7" height="3" fill="#9cdcfe" opacity="0.6"/><rect x="1883.64" y="240.0" width="1.7" height="3" fill="#9cdcfe" opacity="0.6"/><rect x="1885.60" y="240.0" width="1.7" height="3" fill="#9cdcfe" opacity="0.6"/><rect x="1887.56" y="240.0" width="1.7" height="3" fill="#9cdcfe" opacity="0.6"/><rect x="1891.48" y="240.0" width="1.7" height="3" fill="#d4d4d4" opacity="0.6"/><rect x="1895.40" y="240.0" width="1.7" height="3" fill="#9cdcfe" opacity="0.6"/><rect x="1897.36" y="240.0" width="1.7" height="3" fill="#9cdcfe" opacity="0.6"/><rect x="1899.32" y="240.0" width="1.7" height="3" fill="#9cdcfe" opacity="0.6"/><rect x="1901.28" y="240.0" width="1.7" height="3" fill="#d4d4d4" opacity="0.6"/><rect x="1903.24" y="240.0" width="1.7" height="3" fill="#dcdcaa" opacity="0.6"/><rect x="1905.20" y="240.0" width="1.7" height="3" fill="#dcdcaa" opacity="0.6"/><rect x="1907.16" y="240.0" width="1.7" height="3" fill="#dcdcaa" opacity="0.6"/><rect x="1909.12" y="240.0" width="1.7" height="3" fill="#dcdcaa" opacity="0.6"/><rect x="1911.08" y="240.0" width="1.7" height="3" fill="#dcdcaa" opacity="0.6"/><rect x="1913.04" y="240.0" width="1.7" height="3" fill="#dcdcaa" opacity="0.6"/><rect x="1915.00" y="240.0" width="1.7" height="3" fill="#ffd700" opacity="0.6"/><rect x="1916.96" y="240.0" width="1.7" height="3" fill="#9cdcfe" opacity="0.6"/><rect x="1918.92" y="240.0" width="1.7" height="3" fill="#9cdcfe" opacity="0.6"/><rect x="1920.88" y="240.0" width="1.7" height="3" fill="#9cdcfe" opacity="0.6"/><rect x="1922.84" y="240.0" width="1.7" height="3" fill="#9cdcfe" opacity="0.6"/><rect x="1924.80" y="240.0" width="1.7" height="3" fill="#9cdcfe" opacity="0.6"/><rect x="1926.76" y="240.0" width="1.7" height="3" fill="#9cdcfe" opacity="0.6"/><rect x="1928.72" y="240.0" width="1.7" height="3" fill="#9cdcfe" opacity="0.6"/><rect x="1930.68" y="240.0" width="1.7" height="3" fill="#d4d4d4" opacity="0.6"/><rect x="1932.64" y="240.0" width="1.7" height="3" fill="#9cdcfe" opacity="0.6"/><rect x="1934.60" y="240.0" width="1.7" height="3" fill="#9cdcfe" opacity="0.6"/><rect x="1936.56" y="240.0" width="1.7" height="3" fill="#9cdcfe" opacity="0.6"/><rect x="1938.52" y="240.0" width="1.7" height="3" fill="#d4d4d4" opacity="0.6"/><rect x="1940.48" y="240.0" width="1.7" height="3" fill="#9cdcfe" opacity="0.6"/><rect x="1942.44" y="240.0" width="1.7" height="3" fill="#9cdcfe" opacity="0.6"/><rect x="1944.40" y="240.0" width="1.7" height="3" fill="#9cdcfe" opacity="0.6"/><rect x="1946.36" y="240.0" width="1.7" height="3" fill="#9cdcfe" opacity="0.6"/><rect x="1950.28" y="240.0" width="1.7" height="3" fill="#d4d4d4" opacity="0.6"/><rect x="1952.24" y="240.0" width="1.7" height="3" fill="#d4d4d4" opacity="0.6"/><rect x="1956.16" y="240.0" width="1.7" height="3" fill="#b5cea8" opacity="0.6"/><rect x="1958.12" y="240.0" width="1.7" height="3" fill="#b5cea8" opacity="0.6"/><rect x="1960.08" y="240.0" width="1.7" height="3" fill="#b5cea8" opacity="0.6"/><rect x="1962.04" y="240.0" width="1.7" height="3" fill="#b5cea8" opacity="0.6"/><rect x="1964.00" y="240.0" width="1.7" height="3" fill="#ffd700" opacity="0.6"/><rect x="1965.96" y="240.0" width="1.7" height="3" fill="#d4d4d4" opacity="0.6"/><rect x="1866.00" y="248.0" width="1.7" height="3" fill="#6a9955" opacity="0.6"/><rect x="1867.96" y="248.0" width="1.7" height="3" fill="#6a9955" opacity="0.6"/><rect x="1871.88" y="248.0" width="1.7" height="3" fill="#6a9955" opacity="0.6"/><rect x="1873.84" y="248.0" width="1.7" height="3" fill="#6a9955" opacity="0.6"/><rect x="1877.76" y="248.0" width="1.7" height="3" fill="#6a9955" opacity="0.6"/><rect x="1879.72" y="248.0" width="1.7" height="3" fill="#6a9955" opacity="0.6"/><rect x="1883.64" y="248.0" width="1.7" height="3" fill="#6a9955" opacity="0.6"/><rect x="1885.60" y="248.0" width="1.7" height="3" fill="#6a9955" opacity="0.6"/><rect x="1887.56" y="248.0" width="1.7" height="3" fill="#6a9955" opacity="0.6"/><rect x="1891.48" y="248.0" width="1.7" height="3" fill="#6a9955" opacity="0.6"/><rect x="1893.44" y="248.0" width="1.7" height="3" fill="#6a9955" opacity="0.6"/><rect x="1895.40" y="248.0" width="1.7" height="3" fill="#6a9955" opacity="0.6"/><rect x="1897.36" y="248.0" width="1.7" height="3" fill="#6a9955" opacity="0.6"/><rect x="1901.28" y="248.0" width="1.7" height="3" fill="#6a9955" opacity="0.6"/><rect x="1903.24" y="248.0" width="1.7" height="3" fill="#6a9955" opacity="0.6"/><rect x="1905.20" y="248.0" width="1.7" height="3" fill="#6a9955" opacity="0.6"/><rect x="1907.16" y="248.0" width="1.7" height="3" fill="#6a9955" opacity="0.6"/><rect x="1909.12" y="248.0" width="1.7" height="3" fill="#6a9955" opacity="0.6"/><rect x="1913.04" y="248.0" width="1.7" height="3" fill="#6a9955" opacity="0.6"/><rect x="1915.00" y="248.0" width="1.7" height="3" fill="#6a9955" opacity="0.6"/><rect x="1916.96" y="248.0" width="1.7" height="3" fill="#6a9955" opacity="0.6"/><rect x="1918.92" y="248.0" width="1.7" height="3" fill="#6a9955" opacity="0.6"/><rect x="1922.84" y="248.0" width="1.7" height="3" fill="#6a9955" opacity="0.6"/><rect x="1924.80" y="248.0" width="1.7" height="3" fill="#6a9955" opacity="0.6"/><rect x="1926.76" y="248.0" width="1.7" height="3" fill="#6a9955" opacity="0.6"/><rect x="1928.72" y="248.0" width="1.7" height="3" fill="#6a9955" opacity="0.6"/><rect x="1866.00" y="256.0" width="1.7" height="3" fill="#9cdcfe" opacity="0.6"/><rect x="1867.96" y="256.0" width="1.7" height="3" fill="#9cdcfe" opacity="0.6"/><rect x="1869.92" y="256.0" width="1.7" height="3" fill="#9cdcfe" opacity="0.6"/><rect x="1871.88" y="256.0" width="1.7" height="3" fill="#9cdcfe" opacity="0.6"/><rect x="1873.84" y="256.0" width="1.7" height="3" fill="#9cdcfe" opacity="0.6"/><rect x="1875.80" y="256.0" width="1.7" height="3" fill="#9cdcfe" opacity="0.6"/><rect x="1877.76" y="256.0" width="1.7" height="3" fill="#d4d4d4" opacity="0.6"/><rect x="1879.72" y="256.0" width="1.7" height="3" fill="#9cdcfe" opacity="0.6"/><rect x="1881.68" y="256.0" width="1.7" height="3" fill="#9cdcfe" opacity="0.6"/><rect x="1883.64" y="256.0" width="1.7" height="3" fill="#9cdcfe" opacity="0.6"/><rect x="1885.60" y="256.0" width="1.7" height="3" fill="#9cdcfe" opacity="0.6"/><rect x="1887.56" y="256.0" width="1.7" height="3" fill="#9cdcfe" opacity="0.6"/><rect x="1889.52" y="256.0" width="1.7" height="3" fill="#9cdcfe" opacity="0.6"/><rect x="1891.48" y="256.0" width="1.7" height="3" fill="#9cdcfe" opacity="0.6"/><rect x="1895.40" y="256.0" width="1.7" height="3" fill="#d4d4d4" opacity="0.6"/><rect x="1899.32" y="256.0" width="1.7" height="3" fill="#9cdcfe" opacity="0.6"/><rect x="1901.28" y="256.0" width="1.7" height="3" fill="#9cdcfe" opacity="0.6"/><rect x="1903.24" y="256.0" width="1.7" height="3" fill="#9cdcfe" opacity="0.6"/><rect x="1905.20" y="256.0" width="1.7" height="3" fill="#9cdcfe" opacity="0.6"/><rect x="1907.16" y="256.0" width="1.7" height="3" fill="#9cdcfe" opacity="0.6"/><rect x="1909.12" y="256.0" width="1.7" height="3" fill="#9cdcfe" opacity="0.6"/><rect x="1911.08" y="256.0" width="1.7" height="3" fill="#d4d4d4" opacity="0.6"/><rect x="1866" y="260.3" width="106" height="3.7" fill="#264f78" opacity="0.75"/></svg>
<div class="r" style="left:1972.0px;top:223.4px;width:2.0px;height:1484.6px;background:#303030;"></div>
<div class="r" style="left:1972.0px;top:223.4px;width:44.0px;height:1098.6px;background:#434343;"></div>
<div class="r" style="left:2014.0px;top:1322.0px;width:2.0px;height:386.0px;background:#444444;"></div>
<div class="r" style="left:1973.0px;top:605.9px;width:41.0px;height:5.5px;background:#7c7c7c;"></div>
<div class="r" style="left:904.4px;top:1677.7px;width:797.3px;height:30.3px;background:#434343;"></div>
<div class="r" style="left:2016.0px;top:60.0px;width:862.0px;height:100.0px;background:#252526;"></div>
<div class="r" style="left:2016.0px;top:60.0px;width:339.7px;height:100.0px;background:#1e1e1e;"></div>
<svg class="r" style="left:2045px;top:83px;width:39px;height:47px" viewBox="2045 83 39 47"><path d="M2049.3,88.1 L2071.5,88.1 L2080.2,96.8 L2080.2,125.9 L2049.3,125.9 Z" fill="none" stroke="#c5c5c5" stroke-width="2.6" stroke-linejoin="miter"/><path d="M2070.2,86.8 L2081.5,98.1 L2070.2,98.1 Z" fill="#c5c5c5"/></svg>
<div class="t" style="left:2105.5px;top:93.1px;font-size:37px;line-height:37px;color:#ffffff;font-weight:normal;font-style:normal;font-family:'Liberation Sans', sans-serif;letter-spacing:-1.67px;">CodeRoad</div>
<svg class="r" style="left:2292px;top:95px;width:34px;height:33px" viewBox="2292 95 34 33"><path d="M2297.5,100 L2321,123 M2321,100 L2297.5,123" stroke="#c5c5c5" stroke-width="2.6" fill="none"/></svg>
<svg class="r" style="left:2690px;top:86px;width:48px;height:46px" viewBox="2690 86 48 46"><rect x="2696.3" y="92.3" width="35.5" height="33.6" rx="3" fill="none" stroke="#c5c5c5" stroke-width="2.6"/><path d="M2714,92.3 L2714,126" stroke="#c5c5c5" stroke-width="2.6"/></svg>
<div class="r" style="left:2786.9px;top:107.7px;width:6.2px;height:6.2px;background:#c5c5c5;border-radius:50%;"></div>
<div class="r" style="left:2801.3px;top:107.7px;width:6.2px;height:6.2px;background:#c5c5c5;border-radius:50%;"></div>
<div class="r" style="left:2815.6px;top:107.7px;width:6.2px;height:6.2px;background:#c5c5c5;border-radius:50%;"></div>
<div class="r" style="left:2016.0px;top:160.0px;width:836.0px;height:1518.0px;background:#ffffff;"></div>
<div class="r" style="left:2852.0px;top:160.0px;width:26.0px;height:961.6px;background:#1e1e1e;"></div>
<div class="r" style="left:2852.0px;top:1121.6px;width:26.0px;height:556.4px;background:#424242;"></div>
<div class="r" style="left:2878.0px;top:60.0px;width:2.0px;height:1648.0px;background:#6d6d6d;"></div>
<div class="r" style="left:2016px;top:160px;width:836px;height:1546px;overflow:hidden;">
<div class="r" style="left:-2016px;top:-160px;width:2880px;height:1770px;">
<div class="t" style="left:2060.0px;top:148.4px;font-size:32.7px;line-height:32.7px;color:#333333;font-weight:normal;font-style:normal;font-family:'Liberation Sans', sans-serif;letter-spacing:0.14px;-webkit-text-stroke:0px;">be able to check what’s going on in your code. Node</div>
<div class="t" style="left:2060.0px;top:204.4px;font-size:32.7px;line-height:32.7px;color:#333333;font-weight:normal;font-style:normal;font-family:'Liberation Sans', sans-serif;letter-spacing:-0.04px;-webkit-text-stroke:0px;">is just a JavaScript environment. Like client side</div>
<div class="t" style="left:2060.0px;top:260.5px;font-size:32.7px;line-height:32.7px;color:#333333;font-weight:normal;font-style:normal;font-family:'Liberation Sans', sans-serif;letter-spacing:0.02px;-webkit-text-stroke:0px;">JavaScript, you can use the console to display useful</div>
<div class="t" style="left:2060.0px;top:316.6px;font-size:32.7px;line-height:32.7px;color:#333333;font-weight:normal;font-style:normal;font-family:'Liberation Sans', sans-serif;letter-spacing:0.10px;-webkit-text-stroke:0px;">debug information. On your local machine, you</div>
<div class="t" style="left:2060.0px;top:372.6px;font-size:32.7px;line-height:32.7px;color:#333333;font-weight:normal;font-style:normal;font-family:'Liberation Sans', sans-serif;letter-spacing:0.06px;-webkit-text-stroke:0px;">would see the console output in a terminal. On Glitch</div>
<div class="t" style="left:2060.0px;top:428.7px;font-size:32.7px;line-height:32.7px;color:#333333;font-weight:normal;font-style:normal;font-family:'Liberation Sans', sans-serif;letter-spacing:0.13px;-webkit-text-stroke:0px;">you can open the logs in the lower part of the</div>
<div class="t" style="left:2060.0px;top:484.8px;font-size:32.7px;line-height:32.7px;color:#333333;font-weight:normal;font-style:normal;font-family:'Liberation Sans', sans-serif;letter-spacing:0.20px;-webkit-text-stroke:0px;">screen. You can toggle the log panel with the button</div>
<div class="t" style="left:2060.0px;top:540.9px;font-size:32.7px;line-height:32.7px;color:#333333;font-weight:normal;font-style:normal;font-family:'Liberation Sans', sans-serif;letter-spacing:0.26px;-webkit-text-stroke:0px;">‘Logs’ (lower-left, inside the tools menu).</div>
<div class="t" style="left:2060.0px;top:596.9px;font-size:32.7px;line-height:32.7px;color:#333333;font-weight:normal;font-style:normal;font-family:'Liberation Sans', sans-serif;letter-spacing:0.10px;-webkit-text-stroke:0px;">We recommend to keep the log panel open while</div>
<div class="t" style="left:2060.0px;top:653.0px;font-size:32.7px;line-height:32.7px;color:#333333;font-weight:normal;font-style:normal;font-family:'Liberation Sans', sans-serif;letter-spacing:0.06px;-webkit-text-stroke:0px;">working at these challenges. By reading the logs,</div>
<div class="t" style="left:2060.0px;top:709.1px;font-size:32.7px;line-height:32.7px;color:#333333;font-weight:normal;font-style:normal;font-family:'Liberation Sans', sans-serif;letter-spacing:0.04px;-webkit-text-stroke:0px;">you can be aware of the nature of errors that may</div>
<div class="t" style="left:2060.0px;top:765.1px;font-size:32.7px;line-height:32.7px;color:#333333;font-weight:normal;font-style:normal;font-family:'Liberation Sans', sans-serif;letter-spacing:0.16px;-webkit-text-stroke:0px;">occur.</div>
</div></div>
<div class="r" style="left:2016.0px;top:854.2px;width:836.0px;height:92.9px;background:#ebebeb;"></div>
<div class="t" style="left:2059.5px;top:886.7px;font-size:44px;line-height:44px;color:#333333;font-weight:normal;font-style:normal;font-family:'Liberation Sans', sans-serif;letter-spacing:-0.12px;-webkit-text-stroke:0px;">Tasks</div>
<div class="r" style="left:2060.0px;top:1045.8px;width:45.8px;height:46.1px;background:#5585fc;border-radius:7px;"></div>
<svg class="r" style="left:2060px;top:1045px;width:46px;height:47px" viewBox="2060 1045 46 47"><path d="M2073.9,1070.9 L2080.3,1076.8 L2092.3,1061.2" fill="none" stroke="#ffffff" stroke-width="5.2" stroke-linecap="round" stroke-linejoin="round"/></svg>
<div class="t" style="left:2131.5px;top:1052.8px;font-size:32.7px;line-height:32.7px;color:#333333;font-weight:normal;font-style:normal;font-family:'Liberation Sans', sans-serif;letter-spacing:0.12px;-webkit-text-stroke:0px;">NPM install the "express" library module</div>
<div class="t" style="left:2131.5px;top:1108.3px;font-size:32.7px;line-height:32.7px;color:#333333;font-weight:normal;font-style:normal;font-family:'Liberation Sans', sans-serif;letter-spacing:-0.16px;-webkit-text-stroke:0px;">version. Use version 4.x.</div>
<div class="r" style="left:2060px;top:1250.3px;width:45.8px;height:47.2px;box-sizing:border-box;border:2.6px solid #c8cad2;border-radius:7px;background:#fff"></div>
<div class="t" style="left:2131.5px;top:1256.6px;font-size:32.7px;line-height:32.7px;color:#333333;font-weight:normal;font-style:normal;font-family:'Liberation Sans', sans-serif;letter-spacing:0.44px;-webkit-text-stroke:0px;">Modify the</div>
<div class="r" style="left:2297.8px;top:1246.0px;width:193.8px;height:50.0px;background:#000000;border-radius:8px;"></div>
<div class="t" style="left:2303.5px;top:1258.8px;font-size:33.7px;line-height:33.7px;color:#ffffff;font-weight:normal;font-style:normal;font-family:'Liberation Mono', monospace;letter-spacing:0.01px;">server.js</div>
<div class="t" style="left:2499.0px;top:1256.6px;font-size:32.7px;line-height:32.7px;color:#333333;font-weight:normal;font-style:normal;font-family:'Liberation Sans', sans-serif;letter-spacing:0.18px;-webkit-text-stroke:0px;">file to log "Hello</div>
<div class="t" style="left:2131.5px;top:1311.4px;font-size:32.7px;line-height:32.7px;color:#333333;font-weight:normal;font-style:normal;font-family:'Liberation Sans', sans-serif;letter-spacing:0.22px;-webkit-text-stroke:0px;">World" to the console.</div>
<div class="r" style="left:2016.0px;top:1482.0px;width:836.0px;height:103.6px;background:#6c69cd;"></div>
<svg class="r" style="left:2030px;top:1504px;width:60px;height:58px" viewBox="2030 1504 60 58"><circle cx="2059.9" cy="1532.6" r="20.85" fill="none" stroke="#ffffff" stroke-width="4.3"/><path d="M2054.3,1527 Q2054.3,1521.3 2060.1,1521.3 Q2065.8,1521.3 2065.8,1527 Q2065.8,1530.3 2062.6,1532.3 Q2060.1,1533.9 2060.1,1535.8" fill="none" stroke="#ffffff" stroke-width="4.5" stroke-linecap="round"/><circle cx="2060.1" cy="1543" r="3" fill="#ffffff"/></svg>
<div class="t" style="left:2105.3px;top:1512.6px;font-size:44px;line-height:44px;color:#ffffff;font-weight:normal;font-style:normal;font-family:'Liberation Sans', sans-serif;letter-spacing:0.83px;">Help</div>
<div class="r" style="left:2016.0px;top:1585.6px;width:836.0px;height:92.4px;background:#000000;"></div>
<div class="t" style="left:2059.5px;top:1610.2px;font-size:44px;line-height:44px;color:#ffffff;font-weight:normal;font-style:normal;font-family:'Liberation Sans', sans-serif;letter-spacing:0.59px;">1. Meet the Node Console</div>
<div class="t" style="left:2629.0px;top:1615.1px;font-size:37px;line-height:37px;color:#e6e6e6;font-weight:normal;font-style:normal;font-family:'Liberation Sans', sans-serif;letter-spacing:-1.27px;">1 of 2 tasks</div>
<div class="r" style="left:2016.0px;top:1678.0px;width:808.0px;height:28.0px;background:#434343;"></div>
<div class="r" style="left:2824.0px;top:1678.0px;width:28.0px;height:28.0px;background:#1f1f1f;"></div>
<div class="r" style="left:2852.0px;top:1678.0px;width:26.0px;height:28.0px;background:#ffffff;"></div>
<div class="r" style="left:2016.0px;top:1706.0px;width:864.0px;height:2.0px;background:#141414;"></div>
<div class="r" style="left:0.0px;top:1708.0px;width:2880.0px;height:62.0px;background:#3d97dc;border-radius:0 0 12px 12px;"></div>
<div class="r" style="left:2.0px;top:1708.0px;width:2876.0px;height:59.5px;background:#007acc;border-radius:0 0 10px 10px;"></div>
<svg class="r" style="left:40px;top:1714px;width:46px;height:50px" viewBox="40 1714 46 50"><g fill="none" stroke="#ffffff" stroke-width="2.4"><circle cx="54.5" cy="1725.7" r="4.9"/><circle cx="54.5" cy="1753.6" r="4.9"/><circle cx="72.1" cy="1733.2" r="4.9"/><path d="M54.5,1730.6 L54.5,1748.7"/><path d="M54.5,1747.5 Q57,1741.3 63.5,1741.3 L66,1741.3 Q71,1741.3 72.1,1738.1"/></g></svg>
<div class="t" style="left:91.7px;top:1723.0px;font-size:34px;line-height:34px;color:#ffffff;font-weight:normal;font-style:normal;font-family:'Liberation Sans', sans-serif;letter-spacing:-0.78px;">master</div>
<svg class="r" style="left:238px;top:1716px;width:44px;height:48px" viewBox="238 1716 44 48"><g fill="none" stroke="#ffffff" stroke-width="2.6" stroke-linejoin="round"><path d="M256.9,1748.4 L250.5,1748.4 A7.2,7.2 0 1 1 252.3,1734.3 A10.3,10.3 0 0 1 270.5,1734.6 A7.3,7.3 0 0 1 268.6,1748.4 L265,1748.4"/><path d="M260.9,1755 L260.9,1738.5 M255.5,1742.8 L260.9,1737.6 L266.4,1742.8"/></g></svg>
<svg class="r" style="left:322px;top:1722px;width:46px;height:44px" viewBox="322 1722 46 44"><g fill="none" stroke="#ffffff" stroke-width="2.4"><circle cx="345.9" cy="1740" r="15.8"/><path d="M339.6,1733.7 L352.2,1746.3 M352.2,1733.7 L339.6,1746.3"/></g></svg>
<div class="t" style="left:374.6px;top:1723.0px;font-size:34px;line-height:34px;color:#ffffff;font-weight:normal;font-style:normal;font-family:'Liberation Sans', sans-serif;letter-spacing:0.00px;">0</div>
<svg class="r" style="left:400px;top:1720px;width:46px;height:46px" viewBox="400 1720 46 46"><g fill="none" stroke="#ffffff" stroke-width="2.4" stroke-linejoin="round"><path d="M422.8,1724.5 L439,1754 L406.6,1754 Z"/></g><path d="M422.8,1735.5 L422.8,1746" stroke="#ffffff" stroke-width="2.8"/><circle cx="422.8" cy="1749.5" r="1.7" fill="#ffffff"/></svg>
<div class="t" style="left:450.0px;top:1723.0px;font-size:34px;line-height:34px;color:#ffffff;font-weight:normal;font-style:normal;font-family:'Liberation Sans', sans-serif;letter-spacing:0.00px;">0</div>
<svg class="r" style="left:524px;top:1718px;width:28px;height:48px" viewBox="524 1718 28 48"><g fill="none" stroke="#ffffff" stroke-width="2.4"><circle cx="537.2" cy="1726.5" r="3.6"/><path d="M532,1734 L542.5,1734 L542.5,1746.5 L540,1746.5 L540,1755.5 L534.5,1755.5 L534.5,1746.5 L532,1746.5 Z"/></g></svg>
<div class="t" style="left:565.0px;top:1723.0px;font-size:34px;line-height:34px;color:#ffffff;font-weight:normal;font-style:normal;font-family:'Liberation Sans', sans-serif;letter-spacing:-0.90px;">ShMcK</div>
<svg class="r" style="left:714px;top:1716px;width:48px;height:50px" viewBox="714 1716 48 50"><g fill="none" stroke="#ffffff" stroke-width="2.8" stroke-linejoin="round"><path d="M721.5,1746.5 C722,1735 729,1729 741,1729 L742.4,1729 L742.4,1723.6 L755.2,1733.2 L742.4,1742.6 L742.4,1737.3 L739,1737.3 C731,1737.3 726,1740.5 721.5,1746.5 Z"/><circle cx="735.1" cy="1751.4" r="5.6"/></g></svg>
<div class="t" style="left:766.3px;top:1723.0px;font-size:34px;line-height:34px;color:#ffffff;font-weight:normal;font-style:normal;font-family:'Liberation Sans', sans-serif;letter-spacing:-1.26px;">Live Share</div>
<div class="t" style="left:964.9px;top:1723.0px;font-size:34px;line-height:34px;color:#ffffff;font-weight:normal;font-style:normal;font-family:'Liberation Sans', sans-serif;letter-spacing:-1.04px;">Git Graph</div>
<svg class="r" style="left:2708px;top:1716px;width:46px;height:50px" viewBox="2708 1716 46 50"><g fill="none" stroke="#ffffff" stroke-width="2.4" stroke-linejoin="round"><circle cx="2725" cy="1740" r="6"/><path d="M2714,1757.5 Q2714,1748 2725,1748 Q2736,1748 2736,1757.5"/><path d="M2724,1730 L2724,1723 L2748,1723 L2748,1738 L2742,1738 L2738,1743 L2738,1738 L2734,1738"/></g></svg>
<svg class="r" style="left:2796px;top:1716px;width:42px;height:50px" viewBox="2796 1716 42 50"><g fill="none" stroke="#ffffff" stroke-width="2.4" stroke-linejoin="round"><path d="M2804,1751.5 L2807,1741 L2807,1734 Q2807,1723 2816.7,1723 Q2826.4,1723 2826.4,1734 L2826.4,1741 L2829.4,1751.5 Z"/><path d="M2812.7,1752 Q2812.7,1756.5 2816.7,1756.5 Q2820.7,1756.5 2820.7,1752"/></g></svg>
</body></html>
